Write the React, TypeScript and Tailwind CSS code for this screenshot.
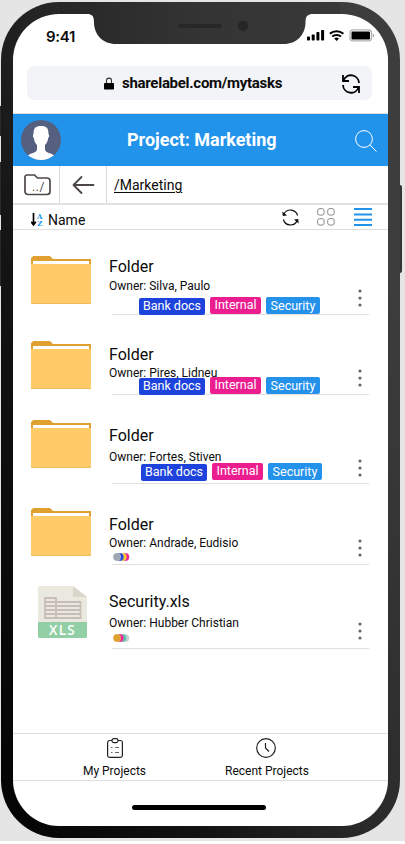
type Entry = {
  title: string;
  owner: string;
  kind: 'folder' | 'xls';
  row: string;
  icon: string;
  titleTop: string;
  ownerTop: string;
  tagTop: string;
  menuTop: string;
  tags?: boolean;
  dots?: string[];
};

const entries: Entry[] = [
  { title: 'Folder', owner: 'Silva, Paulo', kind: 'folder', row: 'h-[85px]', icon: 'mt-[25px]', titleTop: 'mt-[27px]', ownerTop: 'mt-[2px]', tagTop: 'mt-1 ml-[30px]', menuTop: 'mt-[59px]', tags: true },
  { title: 'Folder', owner: 'Pires, Lidneu', kind: 'folder', row: 'h-[80px]', icon: 'mt-[25px]', titleTop: 'mt-[30px]', ownerTop: 'mt-px', tagTop: '-mt-[3px] ml-[30px]', menuTop: 'mt-[54px]', tags: true },
  { title: 'Folder', owner: 'Fortes, Stiven', kind: 'folder', row: 'h-[89px]', icon: 'mt-[24px]', titleTop: 'mt-[31px]', ownerTop: 'mt-[4px]', tagTop: '-mt-px ml-[32px]', menuTop: 'mt-[64px]', tags: true },
  { title: 'Folder', owner: 'Andrade, Eudisio', kind: 'folder', row: 'h-[81px]', icon: 'mt-[23px]', titleTop: 'mt-[31px]', ownerTop: 'mt-px', tagTop: 'mt-[3px] ml-1', menuTop: 'mt-[55px]', dots: ['#9ca7b3', '#1d43dc', '#f8c61f', '#ec1e8f'] },
  { title: 'Security.xls', owner: 'Hubber Christian', kind: 'xls', row: 'h-[84px]', icon: 'mt-[21px] ml-[7px]', titleTop: 'mt-[27px]', ownerTop: 'mt-[4px]', tagTop: 'mt-1 ml-1', menuTop: 'mt-[57px]', dots: ['#e0a030', '#ec1e8f', '#4fc3a8', '#c9cdcd'] },
];

function FolderIcon() {
  return (
    <svg width="60" height="50" viewBox="0 0 60 50">
      <path d="M0 8V3.2L2.2 1H19l3 3h38v8H0z" fill="#dfa02f" />
      <path d="M2 6h56v5H2z" fill="#fff" />
      <path d="M0 9h60v40H0z" fill="#ffcb69" />
      <path d="M0 48h60v1H0z" fill="#efbb5c" />
    </svg>
  );
}

function XlsIcon() {
  return (
    <svg width="49" height="52" viewBox="0 0 49 52">
      <path d="M1 0h34l14 11v26H0V1z" fill="#e9e9e0" />
      <path d="M35 0l14 11H35z" fill="#d8d7ca" />
      <path d="M0 36h49v15l-1 1H1l-1-1z" fill="#93cfa4" />
      <g stroke="#c9bdb8" strokeWidth="1.8" fill="none">
        <path d="M7 12h11v20H7zM18 16h24.5v16H18M7 16h11M7 20h35M7 24h35M7 28h35" />
      </g>
      <text x="24.5" y="49" textAnchor="middle" fill="#fff" fontFamily="Open Sans, sans-serif" fontSize="13.5" fontWeight="600" letterSpacing="1.3">XLS</text>
    </svg>
  );
}

function Tags() {
  return (
    <>
      <span className="mt-px h-[17px] w-[66px] rounded-[2px] bg-[#1d43dc] text-center leading-[16px]">Bank docs</span>
      <span className="h-[17px] w-[51px] rounded-[2px] bg-[#ec1e8f] text-center leading-[15px]">Internal</span>
      <span className="h-[17px] w-[54px] rounded-[2px] bg-[#2491eb] text-center leading-[17px]">Security</span>
    </>
  );
}

function Dots({ colors }: { colors: string[] }) {
  return (
    <svg width="17" height="8" viewBox="0 0 17 8">
      {colors.map((_, i) => {
        const n = colors.length - 1 - i;
        return <circle key={n} cx={4 + n * 2.8} cy="4" r="3.9" fill={colors[n]} stroke="#fff" strokeWidth=".2" />;
      })}
    </svg>
  );
}

function Row({ e }: { e: Entry }) {
  return (
    <div className={`flex pl-[18px] ${e.row}`}>
      <div className="w-[78px] shrink-0">
        <div className={e.icon}>{e.kind === 'folder' ? <FolderIcon /> : <XlsIcon />}</div>
      </div>
      <div className="flex w-[260px] flex-col">
        <div className="flex min-h-0 flex-1 justify-between">
          <div className="whitespace-nowrap">
            <div className={`h-5 text-base leading-5 ${e.titleTop}`}>{e.title}</div>
            <div className={`h-[14px] text-xs leading-[14px] ${e.ownerTop}`}>Owner: {e.owner}</div>
            <div className={`relative flex gap-[5px] text-[12.5px] text-white ${e.tagTop}`}>
              {e.tags && <Tags />}
              {e.dots && <Dots colors={e.dots} />}
            </div>
          </div>
          <svg className={`mr-[7px] shrink-0 ${e.menuTop}`} width="4" height="18" fill="#6b6465">
            <circle cx="2" cy="2" r="1.6" />
            <circle cx="2" cy="9" r="1.6" />
            <circle cx="2" cy="16" r="1.6" />
          </svg>
        </div>
        <div className="ml-[3px] h-px shrink-0 bg-[#e0e0e0]" />
      </div>
    </div>
  );
}

function StatusBar() {
  return (
    <div className="flex h-[52px] shrink-0 justify-between pl-[33px] pr-[13px]">
      <span className="mt-[14px] font-['Inter'] text-[15px] font-semibold leading-[18px] tracking-[-0.3px]">9:41</span>
      <svg className="mt-[15px]" width="68" height="13" viewBox="0 0 68 13">
        <rect x="0" y="7.5" width="3" height="4" rx=".8" />
        <rect x="4.7" y="5.5" width="3" height="6" rx=".8" />
        <rect x="9.4" y="3" width="3" height="8.5" rx=".8" />
        <rect x="14.1" y="1" width="3" height="10.5" rx=".8" />
        <g fill="none" stroke="#000" strokeWidth="2">
          <path d="M22.8 4.8a10 10 0 0 1 13.6 0" />
          <path d="M25.2 7.6a6.5 6.5 0 0 1 8.8 0" />
        </g>
        <path d="M27.2 9.6a3.8 3.8 0 0 1 4.8 0L29.6 12z" />
        <rect x="43" y=".9" width="21.5" height="11" rx="2.8" fill="none" stroke="#b3b3b3" strokeWidth="1.3" />
        <rect x="44.5" y="2.5" width="18.5" height="8" rx="1.2" />
        <path d="M65.7 4.5c2.2.7 2.2 3.3 0 4z" fill="#b3b3b3" />
      </svg>
    </div>
  );
}

export default function App() {
  return (
    <div className="h-[844px] w-[405px] overflow-hidden bg-white font-['Roboto',sans-serif] text-[#0b0b0b]">
      <div className="relative h-[841px] bg-[#e5e5e5] pl-px pt-[2px]">
        <div className="absolute left-0 top-[106px] h-[30px] w-[3px] bg-[#292929]" />
        <div className="absolute left-0 top-[162px] h-[53px] w-[3px] bg-[#292929]" />
        <div className="absolute left-0 top-[230px] h-[56px] w-[3px] bg-[#292929]" />
        <div className="absolute left-[398px] top-[185px] h-[88px] w-[4px] rounded-r-[2px] bg-[#343434]" />
        <div className="relative h-[836px] w-[399px] rounded-[58px] bg-[linear-gradient(70deg,#030303_0%,#131313_30%,#292929_52%,#3d3d3d_85%)] pl-3 pt-3">
          <div className="flex h-[812px] w-[375px] flex-col overflow-hidden rounded-[46px] bg-white">
            <StatusBar />
            <div className="ml-[14px] mr-[16px] flex h-[34px] shrink-0 items-center rounded-[7px] bg-[#f2f4f7]">
              <svg className="ml-[77px] shrink-0" width="10" height="13" viewBox="0 0 10 13">
                <path d="M2.5 6V3.6a2.5 2.5 0 0 1 5 0V6" fill="none" stroke="#333" strokeWidth="1.1" />
                <rect y="6" width="10" height="6.5" rx=".8" />
              </svg>
              <span className="ml-[8px] w-[160px] shrink-0 whitespace-nowrap text-[15px] font-bold leading-[18px] tracking-[-0.28px]">sharelabel.com/mytasks</span>
              <svg className="ml-[59px] mt-[2px] shrink-0" width="20" height="20" viewBox="0 0 20 20" fill="none" stroke="#000" strokeWidth="1.8">
                <path d="M2 1v6h6M2.5 6.5A8 8 0 0 1 18 9M18 19v-6h-6M17.5 13.5A8 8 0 0 1 2 11" />
              </svg>
            </div>
            <div className="mt-[13px] h-px shrink-0 bg-[#dedede]" />
            <div className="flex h-[52px] shrink-0 items-center bg-[#2293eb] pl-[8px] text-white">
              <svg width="40" height="40" viewBox="0 0 40 40">
                <circle cx="20" cy="20" r="20" fill="#556080" />
                <path d="M20 6c-5.500 0-7.500 2-7.500 8-.8.7-.8 2.800.3 4 .4 3.300 1.700 5.500 3.200 7v4.500C15.500 33 10.500 33 7 35.200a20 20 0 0 0 26 0C29.500 33 24.500 33 24 29.500V25c1.500-1.500 2.800-3.700 3.200-7 1.100-1.200 1.100-3.300.3-4 0-6-2-8-7.500-8z" fill="#fff" />
              </svg>
              <h1 className="ml-[66px] w-[150px] whitespace-nowrap text-lg font-bold leading-5 tracking-[-0.02px]">Project: Marketing</h1>
              <svg className="ml-[78px] mt-px" width="22" height="22" viewBox="0 0 22 22" fill="none" stroke="#fff" strokeWidth="1">
                <circle cx="9" cy="9" r="8.4" />
                <path d="M15 15l6.500 6.500" />
              </svg>
            </div>
            <div className="flex h-[37px] shrink-0">
              <div className="flex w-[47px] items-center border-r border-[#d9d9d9] pl-[11px] pt-px">
                <svg width="27" height="22" viewBox="0 0 27 22">
                  <path d="M3 1h7.500l3 3H23a3 3 0 0 1 3 3v10.500a3 3 0 0 1-3 3H4a3 3 0 0 1-3-3V3a2 2 0 0 1 2-2z" fill="none" stroke="#4d4648" strokeWidth="1.700" />
                  <text x="8" y="17" fill="#4d4648" fontFamily="Roboto, sans-serif" fontSize="12" letterSpacing=".6">../</text>
                </svg>
              </div>
              <div className="flex w-[47px] items-center border-r border-[#d9d9d9] pl-[12px] pt-px">
                <svg width="23" height="20" viewBox="0 0 23 20" fill="none" stroke="#4d4648" strokeWidth="1.800" strokeLinecap="round" strokeLinejoin="round">
                  <path d="M21.500 10H1.500M9.500 2L1.500 10l8 8" />
                </svg>
              </div>
              <span className="ml-[7px] mt-[10px] text-sm leading-[18px] underline underline-offset-2">/Marketing</span>
            </div>
            <div className="h-[2px] shrink-0 bg-[#e1e1e1]" />
            <div className="flex h-[25px] shrink-0 items-center border-b border-[#dedede] pl-[18px]">
              <svg className="mt-[4px] shrink-0" width="13" height="15" viewBox="0 0 13 15">
                <path d="M2.500 1v11M.2 9.800l2.300 3 2.300-3" stroke="#000" strokeWidth="1.700" fill="none" />
                <text x="6" y="6.600" fill="#2293eb" fontFamily="DejaVu Serif, serif" fontSize="7" fontWeight="700">A</text>
                <text x="6.200" y="13.600" fill="#2293eb" fontFamily="DejaVu Serif, serif" fontSize="7" fontWeight="700">Z</text>
              </svg>
              <span className="ml-1 mt-[5px] w-[234px] text-sm leading-[18px]">Name</span>
              <svg width="17" height="17" viewBox="0 0 17 17" fill="none" stroke="#111" strokeWidth="1.200">
                <path d="M1.800 5.500A7.300 7.300 0 0 1 15.600 6.500M15.200 11.500A7.300 7.300 0 0 1 1.400 10.500" />
                <path d="M.3 2.500L.8 7l4.300-.5zM16.700 14.500L16.200 10l-4.300.5z" fill="#111" stroke="none" />
              </svg>
              <svg className="-mt-px ml-[18px]" width="18" height="18" viewBox="0 0 18 18" fill="none" stroke="#888" strokeWidth="1">
                <rect x=".6" y=".6" width="6.500" height="6.500" rx="2.200" />
                <rect x="10.700" y=".6" width="6.500" height="6.500" rx="2.200" />
                <rect x=".6" y="10.600" width="6.500" height="6.500" rx="2.200" />
                <rect x="10.700" y="10.600" width="6.500" height="6.500" rx="2.200" />
              </svg>
              <svg className="ml-[19px]" width="18" height="18" fill="#2293eb">
                <path d="M0 0h18v2H0zM0 5.500h18v2H0zM0 10.700h18v2H0zM0 16h18v2H0z" />
              </svg>
            </div>
            <main className="h-[503px] shrink-0">
              {entries.map((e) => <Row key={e.owner} e={e} />)}
            </main>
            <nav className="flex h-[48px] shrink-0 border-y border-[#dedede] text-xs leading-[14px]">
              <div className="ml-[51px] flex w-[101px] flex-col items-center">
                <svg className="mt-1" width="16" height="20" viewBox="0 0 16 20" fill="none" stroke="#222" strokeWidth="1.200">
                  <path d="M5 2.500H2.500A2 2 0 0 0 .6 4.500v13a2 2 0 0 0 2 1.900h10.800a2 2 0 0 0 2-1.900v-13a2 2 0 0 0-2-2H11" />
                  <rect x="5" y=".6" width="6" height="4" rx="1.800" />
                  <path d="M4 9.500h1.500M8 9.500h4M4 14.500h1.500M8 14.500h4" stroke="#666" />
                </svg>
                <span className="mt-[6px]">My Projects</span>
              </div>
              <div className="ml-[49px] flex w-[106px] flex-col items-center">
                <svg className="-ml-[2px] mt-1" width="20" height="20" viewBox="0 0 20 20" fill="none" stroke="#222" strokeWidth="1.200">
                  <circle cx="10" cy="10" r="9.300" />
                  <path d="M9.500 5v5l3.500 3.500" />
                </svg>
                <span className="mt-[6px] whitespace-nowrap">Recent Projects</span>
              </div>
            </nav>
            <div className="ml-[119px] mt-6 h-[5px] w-[134px] shrink-0 rounded-full bg-black" />
          </div>
          <svg className="absolute left-0 top-0" width="399" height="60" viewBox="1 2 399 60">
            <defs>
              <linearGradient id="notch" x1="0" x2="1">
                <stop offset="0" stopColor="#272727" />
                <stop offset=".5" stopColor="#343434" />
                <stop offset="1" stopColor="#383838" />
              </linearGradient>
            </defs>
            <path d="M60 2h280v12h-27c-5 0-7.500 2-7.500 8 0 13-9 22-21.500 22H116C103 44 94 35 94 22c0-6-2-8-7-8H60z" fill="url(#notch)" />
            <rect x="178" y="24" width="44" height="4" rx="2" fill="#272727" />
            <circle cx="243" cy="26" r="5" fill="#252525" />
          </svg>
        </div>
      </div>
    </div>
  );
}
